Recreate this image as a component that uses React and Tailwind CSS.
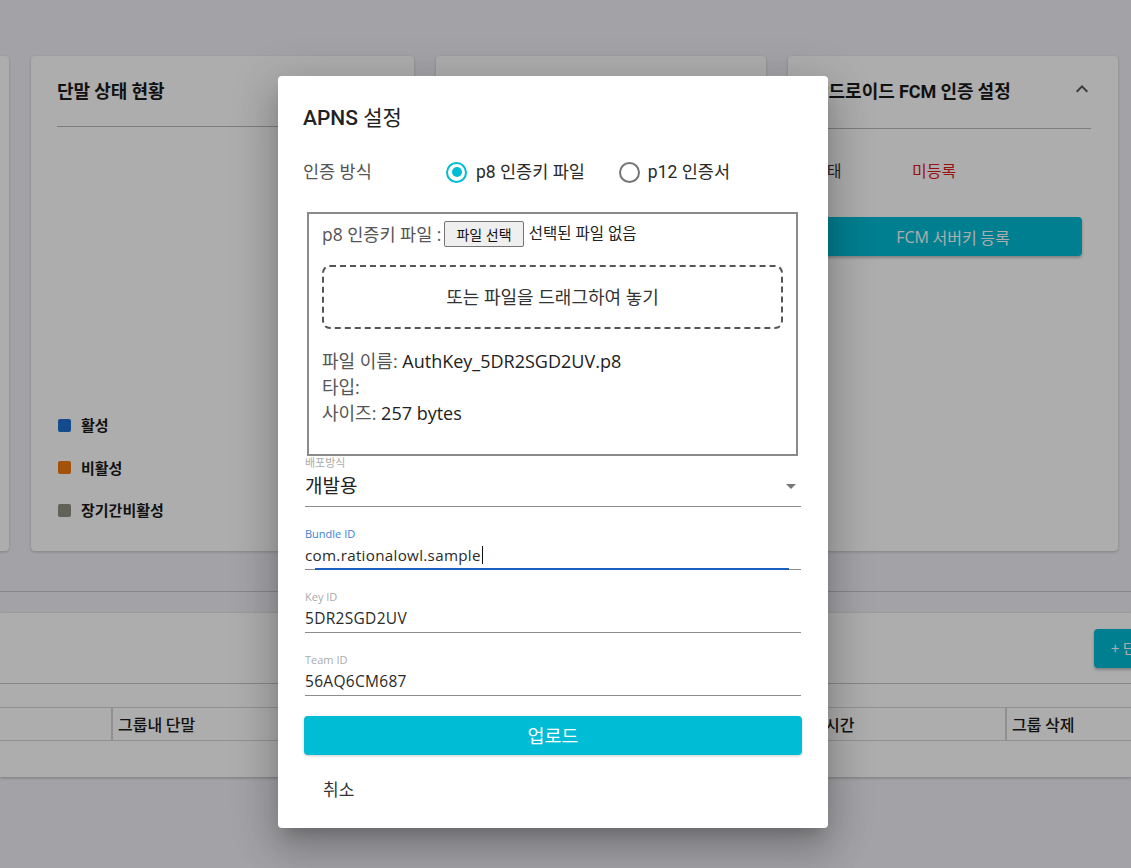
const KR = "font-['Noto_Sans_CJK_KR',sans-serif]";
const RB = "font-['Roboto','Noto_Sans_CJK_KR',sans-serif]";
const OS = "font-['Open_Sans','Noto_Sans_CJK_KR',sans-serif]";

function ExpandLess() {
  return (
    <svg width="24" height="24" viewBox="0 0 24 24" fill="#555">
      <path d="M12 8l-6 6 1.41 1.41L12 10.83l4.59 4.58L18 14z" />
    </svg>
  );
}

function ArrowDrop() {
  return (
    <svg width="24" height="24" viewBox="0 0 24 24" fill="#777">
      <path d="M7 10l5 5 5-5z" />
    </svg>
  );
}

function Field({ label, value, focused, size }) {
  return (
    <div className="pt-[20px]">
      <div className={`text-[11px] leading-[14px] ${focused ? "text-[#3d7fd6]" : "text-[#ababab]"} ${OS}`}>{label}</div>
      <div className="relative border-b border-[#8c8c8c]">
        <div className={`${size} leading-[28px] tracking-[0.3px] text-[#2a2a2a] ${OS}`}>
          {value}
          {focused && <span className="ml-px inline-block h-[18px] w-px bg-[#111] align-[-3px]" />}
        </div>
        {focused && <div className="absolute bottom-[-1px] left-[10px] right-[12px] h-[2px] bg-[#1c5fbf]" />}
      </div>
    </div>
  );
}

export default function App() {
  return (
    <div className={`relative h-[868px] w-[1131px] overflow-hidden bg-[#f0f0f6] ${KR}`}>
      {/* top section */}
      <div className="border-b border-[#c4c4cc] pt-[56px] pb-[40px]">
        <div className="flex justify-end gap-[22px] pr-[13px]">
          <div className="h-[495px] w-[330px] shrink-0 rounded bg-white shadow-[0_1px_3px_rgba(0,0,0,0.2)]" />
          <div className="flex h-[495px] w-[383px] shrink-0 flex-col rounded bg-white px-[26px] shadow-[0_1px_3px_rgba(0,0,0,0.2)]">
            <div className="pt-[23px] text-[18px] font-semibold leading-[22px] text-[#1a1a1a]">단말 상태 현황</div>
            <div className="mt-[25px] border-t border-[#b8b8b8]" />
            <div className="flex-1" />
            <div className="flex flex-col gap-[22.5px] pb-[31px] pl-px">
              {[
                ["활성", "bg-[#1c6fd0]"],
                ["비활성", "bg-[#ef7a10]"],
                ["장기간비활성", "bg-[#8f8f80]"],
              ].map(([t, c]) => (
                <div key={t} className="flex h-[20px] items-center gap-[10px]">
                  <span className={`h-[13px] w-[13px] rounded-[2px] ${c}`} />
                  <span className="text-[15px] font-semibold leading-[20px] text-[#1a1a1a]">{t}</span>
                </div>
              ))}
            </div>
          </div>
          <div className="flex h-[495px] w-[330px] shrink-0 flex-col rounded bg-white px-[26px] shadow-[0_1px_3px_rgba(0,0,0,0.2)]">
            <div className="pt-[23px] text-[18px] font-semibold leading-[22px] text-[#1a1a1a]">iOS APNS 인증 설정</div>
            <div className="mt-[25px] border-t border-[#b8b8b8]" />
          </div>
          <div className="flex h-[495px] w-[330px] shrink-0 flex-col rounded bg-white pl-[24px] pr-[27px] shadow-[0_1px_3px_rgba(0,0,0,0.2)]">
            <div className="flex items-center justify-between pt-[23px]">
              <div className="text-[18px] font-semibold leading-[22px] text-[#1a1a1a]">
                안드로이드 <span className="font-['Roboto'] font-bold">FCM</span> 인증 설정
              </div>
              <div className="-mr-[3px] -mt-[5px]">
                <ExpandLess />
              </div>
            </div>
            <div className="mt-[25px] border-t border-[#b8b8b8]" />
            <div className="mt-[31px] flex text-[16px] leading-[20px]">
              <span className="w-[100px] text-[#333]">상태</span>
              <span className="text-[#e01818]">미등록</span>
            </div>
            <div className="mt-[37px] mr-[9px] flex h-[39px] w-[258px] items-center justify-center self-end rounded bg-[#00bcd4] text-[16px] text-white shadow-[0_2px_3px_rgba(0,0,0,0.25)]">
              <span className={OS}>FCM</span>&nbsp;서버키 등록
            </div>
          </div>
        </div>
      </div>

      {/* bottom card */}
      <div className="mt-[21px] bg-white shadow-[0_1px_3px_rgba(0,0,0,0.25)]">
        <div className="flex h-[71px] justify-end border-b border-[#c8c8c8] pt-[16px]">
          <div className="-mr-[79px] flex h-[39px] w-[116px] shrink-0 items-center rounded bg-[#00bcd4] pl-[17px] text-[15px] text-white shadow-[0_2px_3px_rgba(0,0,0,0.25)]">
            + 단말 그룹
          </div>
        </div>
        <div className="h-[23px]" />
        <div className="grid h-[34px] grid-cols-[111px_337px_337px_220px_1fr] border-y border-[#d6d6d6] text-[16px] font-medium leading-[32px] text-[#1a1a1a]">
          <div />
          <div className="border-l-2 border-[#d6d6d6] pl-[5px]">그룹내 단말</div>
          <div className="border-l-2 border-[#d6d6d6] pl-[5px]">그룹 이름</div>
          <div className="border-l-2 border-[#d6d6d6] pl-[5px]">생성 시간</div>
          <div className="border-l-2 border-[#d6d6d6] pl-[5px]">그룹 삭제</div>
        </div>
        <div className="h-[36px]" />
      </div>

      {/* overlay */}
      <div className="absolute inset-0 bg-black/[0.32]" />

      {/* dialog */}
      <div className="absolute left-[278px] top-[76px] flex h-[752px] w-[550px] flex-col rounded bg-white px-[27px] shadow-[0_11px_15px_-7px_rgba(0,0,0,0.2),0_24px_38px_3px_rgba(0,0,0,0.14),0_9px_46px_8px_rgba(0,0,0,0.12)]">
        <div className={`-ml-[2px] pt-[26px] text-[21px] leading-[32px] text-[#222] ${RB}`}>
          <span className="font-medium">APNS</span> 설정
        </div>

        <div className={`-ml-[2px] mt-[26px] flex h-[24px] items-center text-[17.5px] ${RB}`}>
          <span className="w-[143px] text-[#555]">인증 방식</span>
          <span className="flex h-[21px] w-[21px] items-center justify-center rounded-full border-2 border-[#00bcd4]">
            <span className="h-[10px] w-[10px] rounded-full bg-[#00bcd4]" />
          </span>
          <span className="ml-[9px] text-[#2a2a2a]">p8 인증키 파일</span>
          <span className="ml-[34px] h-[21px] w-[21px] rounded-full border-2 border-[#757575]" />
          <span className="ml-[8px] text-[#2a2a2a]">p12 인증서</span>
        </div>

        <div className={`ml-[2px] mt-[28px] box-border h-[244px] w-[491px] border-2 border-[#8a8a8a] px-[13px] pt-[7px] ${OS}`}>
          <div className="flex h-[26px] items-center">
            <span className="text-[17.5px] text-[#555]">p8 인증키 파일 :</span>
            <span className="ml-[3px] flex h-[26px] items-center rounded-[2px] border border-[#767676] bg-[#efefef] px-[11px] text-[14px] text-[#111]">
              파일 선택
            </span>
            <span className="ml-[5px] text-[15.5px] text-[#222]">선택된 파일 없음</span>
          </div>
          <div className="mt-[18px] flex h-[64px] items-center justify-center rounded-lg border-2 border-dashed border-[#555] text-[18px] text-[#333]">
            또는 파일을 드래그하여 놓기
          </div>
          <div className="mt-[19px] text-[18px] leading-[26px]">
            <div>
              <span className="text-[#555]">파일 이름: </span>
              <span className="text-[#222]">AuthKey_5DR2SGD2UV.p8</span>
            </div>
            <div className="text-[#555]">타입:</div>
            <div>
              <span className="text-[#555]">사이즈: </span>
              <span className="text-[#222]">257 bytes</span>
            </div>
          </div>
        </div>

        <div>
          <div className={`text-[11px] leading-[14px] text-[#ababab] ${OS}`}>배포방식</div>
          <div className="mt-[2px] flex items-center justify-between border-b border-[#8c8c8c] pb-[6px]">
            <span className={`text-[19px] leading-[28px] text-[#222] ${OS}`}>개발용</span>
            <span className="-mr-[2px]">
              <ArrowDrop />
            </span>
          </div>
        </div>

        <Field label="Bundle ID" value="com.rationalowl.sample" focused size="text-[15.2px]" />
        <Field label="Key ID" value="5DR2SGD2UV" size="text-[15.5px]" />
        <Field label="Team ID" value="56AQ6CM687" size="text-[15.5px]" />

        <div className={`-mx-px mt-[20px] flex h-[39px] items-center justify-center rounded bg-[#00bcd4] text-[18.5px] text-white shadow-[0_1px_3px_rgba(0,0,0,0.2)] ${OS}`}>
          업로드
        </div>

        <div className={`ml-[18px] mt-[17px] flex h-[36px] items-center text-[17px] text-[#333] ${OS}`}>취소</div>
      </div>
    </div>
  );
}
